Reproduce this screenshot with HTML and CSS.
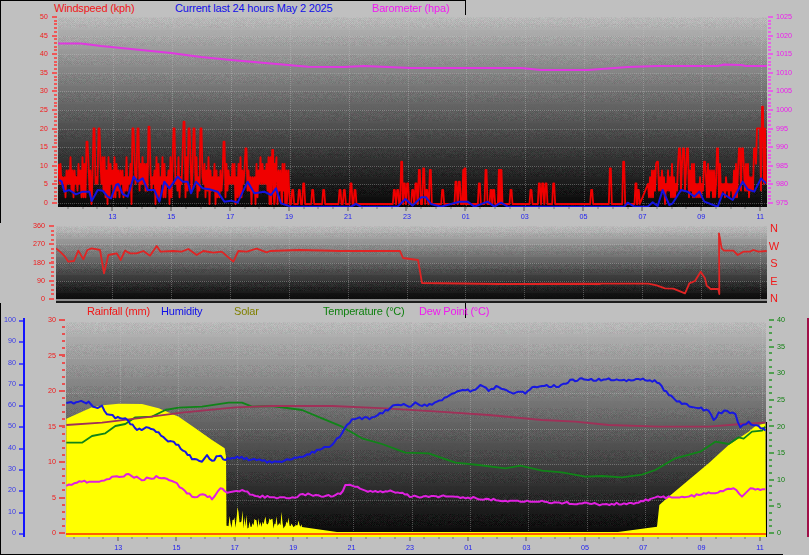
FILE: index.html
```html
<!DOCTYPE html>
<html lang="en">
<head>
    <meta charset="UTF-8">
    <title>Current last 24 hours</title>
    <link rel="stylesheet" href="styles.css">
</head>
<body>
    <section class="panel panel-wind">
        <div class="titles titles-wind">
            <span class="red">Windspeed (kph)</span>
            <span class="blue">Current last 24 hours May 2 2025</span>
            <span class="magenta">Barometer (hpa)</span>
        </div>
        <div class="chart-row">
            <div class="labels labels-wind red">
                <span>50</span><span>45</span><span>40</span><span>35</span><span>30</span><span>25</span>
                <span>20</span><span>15</span><span>10</span><span>5</span><span>0</span>
            </div>
            <div class="ticks ticks-wind"></div>
            <canvas id="windChart" width="709" height="190"></canvas>
            <div class="ticks ticks-baro"></div>
            <div class="labels labels-baro magenta">
                <span>1025</span><span>1020</span><span>1015</span><span>1010</span><span>1005</span><span>1000</span>
                <span>995</span><span>990</span><span>985</span><span>980</span><span>975</span>
            </div>
        </div>
        <div class="hour-ticks hour-ticks-wind"></div>
        <div class="hours hours-wind">
            <span>13</span><span>15</span><span>17</span><span>19</span><span>21</span><span>23</span>
            <span>01</span><span>03</span><span>05</span><span>07</span><span>09</span><span>11</span>
        </div>
    </section>

    <section class="panel panel-dir">
        <div class="chart-row">
            <div class="labels labels-dir red">
                <span>360</span><span>270</span><span>180</span><span>90</span><span>0</span>
            </div>
            <div class="ticks ticks-dir"></div>
            <canvas id="dirChart" width="711" height="77"></canvas>
            <div class="compass red">
                <span>N</span><span>W</span><span>S</span><span>E</span><span>N</span>
            </div>
        </div>
    </section>

    <section class="panel panel-temp">
        <div class="titles titles-temp">
            <span class="red">Rainfall (mm)</span>
            <span class="blue">Humidity</span>
            <span class="olive">Solar</span>
            <span class="green">Temperature (°C)</span>
            <span class="magenta">Dew Point (°C)</span>
        </div>
        <div class="chart-row">
            <div class="labels labels-hum blue-soft">
                <span>100</span><span>90</span><span>80</span><span>70</span><span>60</span><span>50</span>
                <span>40</span><span>30</span><span>20</span><span>10</span><span>0</span>
            </div>
            <div class="ticks ticks-hum"></div>
            <div class="labels labels-rain red">
                <span>30</span><span>25</span><span>20</span><span>15</span><span>10</span><span>5</span><span>0</span>
            </div>
            <div class="ticks ticks-rain"></div>
            <canvas id="tempChart" width="701" height="215"></canvas>
            <div class="ticks ticks-temp"></div>
            <div class="labels labels-temp green">
                <span>40</span><span>35</span><span>30</span><span>25</span><span>20</span>
                <span>15</span><span>10</span><span>5</span><span>0</span>
            </div>
            <div class="solar-bar"></div>
        </div>
        <div class="hour-ticks hour-ticks-temp"></div>
        <div class="hours hours-temp">
            <span>13</span><span>15</span><span>17</span><span>19</span><span>21</span><span>23</span>
            <span>01</span><span>03</span><span>05</span><span>07</span><span>09</span><span>11</span>
        </div>
        <div class="bottom-line"></div>
    </section>

    <script src="charts.js"></script>
</body>
</html>
```

FILE: styles.css
```css
html, body {
    margin: 0;
    padding: 0;
}
body {
    width: 809px;
    height: 555px;
    overflow: hidden;
    background-color: #c0c0c0;
    font-family: "Liberation Sans", Arial, sans-serif;
}
canvas {
    display: block;
}
.red { color: #f01818; }
.blue { color: #1010e8; }
.blue-soft { color: #3a3ae8; }
.magenta { color: #f018f0; }
.olive { color: #808000; }
.green { color: #108010; }

.panel {
    box-sizing: border-box;
    padding-left: 1px;
}
.panel-wind {
    height: 223px;
    padding-left: 0;
    border-left: 1px solid #000;
}
.panel-dir {
    height: 80px;
    padding-top: 3px;
}
.panel-temp {
    height: 252px;
    padding-left: 0;
    border-left: 1px solid #000;
}

/* legend rows */
.titles {
    display: grid;
    box-sizing: border-box;
    font-size: 11px;
    line-height: 14px;
    letter-spacing: -0.18px;
    white-space: nowrap;
}
.titles-wind {
    width: 465px;
    height: 17px;
    padding-left: 53px;
    grid-template-columns: 121px 197px 1fr;
    border-top: 1px solid #000;
    background: linear-gradient(#000, #000) right top / 1px 14px no-repeat;
}
.titles-temp {
    height: 17px;
    padding-left: 86px;
    padding-top: 1px;
    grid-template-columns: 74px 73px 89px 96px 1fr;
    background: linear-gradient(#000, #000) 464px 0 / 1px 15px no-repeat;
}

.chart-row {
    display: flex;
    align-items: flex-start;
}

/* value scales: zero-height spans sit centred on their tick */
.labels {
    display: flex;
    flex-direction: column;
    justify-content: space-between;
    font-size: 7.2px;
}
.labels span {
    height: 0;
    line-height: 0;
    text-align: right;
}
.labels-wind { width: 47px; height: 186px; margin-right: 4px; }
.labels-baro { height: 186px; margin-left: 3px; }
.labels-baro span { text-align: left; }
.labels-dir { width: 44px; height: 73px; margin-right: 4px; }
.labels-hum { width: 15px; height: 213px; margin-right: 3px; }
.labels-rain { width: 31px; height: 213px; margin-right: 3px; }
.labels-temp { height: 213px; margin-left: 3px; }
.labels-temp span { text-align: left; }

.ticks {
    flex: none;
    width: 5px;
    margin-top: -1px;
}
.ticks-wind {
    margin-right: 1px;
    height: 188px;
    background:
        repeating-linear-gradient(#ee5858 0 2px, transparent 2px 18.6px) left top / 5px 100% no-repeat,
        repeating-linear-gradient(#ee5858 0 2px, transparent 2px 3.72px) right top / 3px 100% no-repeat;
}
.ticks-baro {
    margin-left: 1px;
    height: 188px;
    background:
        repeating-linear-gradient(#e860e8 0 2px, transparent 2px 18.6px) left top / 5px 100% no-repeat,
        repeating-linear-gradient(#e860e8 0 2px, transparent 2px 3.72px) left top / 3px 100% no-repeat;
}
.ticks-dir {
    margin-right: 2px;
    height: 75px;
    background:
        repeating-linear-gradient(#ee5858 0 2px, transparent 2px 18.25px) left top / 5px 100% no-repeat,
        repeating-linear-gradient(#ee5858 0 2px, transparent 2px 4.56px) right top / 3px 100% no-repeat;
}
.ticks-hum {
    width: 6px;
    height: 219px;
    margin-top: -2px;
    background:
        linear-gradient(#1414ff, #1414ff) right top / 2px 100% no-repeat,
        repeating-linear-gradient(#5050f0 0 2px, transparent 2px 21.3px) left 2px / 5px 100% no-repeat;
}
.ticks-rain {
    width: 6px;
    margin-right: 1px;
    height: 215px;
    background:
        repeating-linear-gradient(#e85050 0 2px, transparent 2px 35.5px) left top / 6px 100% no-repeat,
        repeating-linear-gradient(#e85050 0 2px, transparent 2px 7.1px) right top / 3px 100% no-repeat;
}
.ticks-temp {
    margin-left: 2px;
    height: 215px;
    background:
        repeating-linear-gradient(#50a050 0 2px, transparent 2px 26.625px) left top / 5px 100% no-repeat,
        repeating-linear-gradient(#50a050 0 2px, transparent 2px 6.656px) left top / 3px 100% no-repeat;
}
#tempChart {
    margin-top: 2px;
}
.compass {
    display: flex;
    flex-direction: column;
    justify-content: space-between;
    width: 12px;
    height: 70px;
    margin: 2px 0 0 1px;
    font-size: 11px;
}
.compass span {
    height: 0;
    line-height: 0;
    text-align: center;
}
.solar-bar {
    width: 2px;
    height: 219px;
    margin-top: -2px;
    margin-left: auto;
    background-color: #a01048;
}

/* hour axis below the plots */
.hour-ticks {
    height: 4px;
}
.hour-ticks-wind {
    width: 709px;
    margin-left: 56px;
    background:
        repeating-linear-gradient(to right, #8c8c8c 0 2px, transparent 2px 58.9px) 54px 0 / 100% 4px no-repeat,
        repeating-linear-gradient(to right, #9c9c9c 0 2px, transparent 2px 14.725px) 10px 0 / 100% 2px no-repeat;
}
.hour-ticks-temp {
    width: 701px;
    margin-left: 63px;
    background:
        repeating-linear-gradient(to right, #8c8c8c 0 2px, transparent 2px 58.35px) 53px 0 / 100% 4px no-repeat,
        repeating-linear-gradient(to right, #9c9c9c 0 2px, transparent 2px 14.59px) 9px 0 / 100% 2px no-repeat;
}
.hours {
    display: grid;
    font-size: 7.2px;
    text-align: center;
    color: #2020f0;
}
.hours-wind {
    height: 12px;
    line-height: 12px;
    margin-left: 82px;
    grid-template-columns: repeat(12, 58.9px);
}
.hours-temp {
    height: 13px;
    line-height: 14px;
    margin-left: 88px;
    grid-template-columns: repeat(12, 58.35px);
}
.bottom-line {
    width: 782px;
    height: 1px;
    background-color: #000;
}
```

FILE: charts.js
```js
// Small seeded generator so the noisy parts are the same on every load
let seed = 48271;
function rnd() {
    seed = (seed * 16807) % 2147483647;
    return seed / 2147483647;
}

// Series were read off 3x crops: crop origin + zoomed coordinates
function fromCrop(ox, oy, pts) {
    return pts.map(p => [ox + p[0] / 3, oy + p[1] / 3]);
}

function drawBackground(ctx, w, h, bandHeight) {
    const img = ctx.createImageData(w, h);
    for (let y = 0; y < h; y++) {
        const t = y / h;
        const band = Math.floor(y / bandHeight);
        const pos = (y / bandHeight) - band;
        const stepT = (band + Math.floor(pos * 3) / 3) * bandHeight / h;
        const grey = 6 + 178 * Math.pow(1 - (t + stepT) / 2, 1.05);
        const amp = pos < 0.55 ? 14 : 2;
        for (let x = 0; x < w; x++) {
            const n = ((x + y) % 2 ? 1 : -1) * amp * 0.3 + (rnd() - 0.5) * amp;
            const i = (y * w + x) * 4;
            const tint = pos < 0.55 ? (rnd() - 0.5) * 8 : 0;
            img.data[i] = grey + n + tint;
            img.data[i + 1] = grey + n - tint;
            img.data[i + 2] = grey + n;
            img.data[i + 3] = 255;
        }
    }
    ctx.putImageData(img, 0, 0);
}

function drawGrid(ctx, w, h, rowStart, rowStep, colStart, colStep) {
    ctx.fillStyle = 'rgba(200,200,200,0.35)';
    for (let y = rowStart; y < h; y += rowStep) {
        for (let x = 0; x < w; x += 2) ctx.fillRect(x, Math.round(y), 1, 1);
    }
    for (let x = colStart; x < w; x += colStep) {
        for (let y = 0; y < h; y += 2) ctx.fillRect(Math.round(x), y, 1, 1);
    }
}

// pts are page coordinates, ox/oy the canvas origin on the page
function line(ctx, pts, ox, oy, color, width) {
    ctx.beginPath();
    pts.forEach((p, i) => {
        if (i === 0) ctx.moveTo(p[0] - ox, p[1] - oy);
        else ctx.lineTo(p[0] - ox, p[1] - oy);
    });
    ctx.strokeStyle = color;
    ctx.lineWidth = width;
    ctx.lineJoin = 'round';
    ctx.stroke();
}

// Adds jitter between the read-off points for the noisy sensor lines
function roughen(pts, amount) {
    const out = [];
    for (let i = 0; i < pts.length - 1; i++) {
        const [x0, y0] = pts[i];
        const [x1, y1] = pts[i + 1];
        const steps = Math.max(1, Math.round((x1 - x0) / 2.5));
        for (let s = 0; s < steps; s++) {
            const k = s / steps;
            out.push([x0 + (x1 - x0) * k, y0 + (y1 - y0) * k + Math.round((rnd() - 0.5) * amount)]);
        }
    }
    out.push(pts[pts.length - 1]);
    return out;
}

// Gusts swing between a low and a high reading on every sample
function busyGusts(fromX, toX, lowMax, highMin, highMax, peaks, zero, level) {
    const out = [];
    let up = true;
    for (let x = fromX; x < toX; x += 1) {
        let n;
        if (up) n = highMin + Math.floor(rnd() * (highMax - highMin + 1));
        else n = rnd() < 0.08 ? 0 : 1 + Math.floor(rnd() * lowMax);
        let y = zero - n * level;
        peaks.forEach(p => {
            if (Math.abs(p[0] - x) < 1) y = p[1];
        });
        out.push([x, y]);
        up = !up;
    }
    return out;
}

// Windspeed + barometer
function drawWind() {
    const ctx = document.getElementById('windChart').getContext('2d');
    const ox = 57, oy = 17;
    drawBackground(ctx, 709, 190, 18.6);
    drawGrid(ctx, 709, 190, 0, 18.6, 55, 58.9);

    const zero = 204;
    const level = 6.7;

    // busy stretch up to 18:30
    const leftPeaks = fromCrop(0, 0, [[258, 425], [280, 385], [295, 385], [395, 385], [410, 385], [445, 380],
        [520, 385], [548, 365], [565, 385], [580, 385], [600, 385], [668, 425], [735, 445]]);
    let gust = busyGusts(57.5, 288, 3, 4, 7, leftPeaks, zero, level);

    // calm night, mostly isolated gusts
    const spikes = fromCrop(270, 0, [[5, 450], [15, 510], [38, 555], [52, 550], [65, 570], [85, 570], [98, 550], [125, 570],
        [158, 570], [207, 570], [220, 570], [240, 550], [252, 570], [370, 570], [380, 570], [392, 485], [400, 550],
        [410, 550], [425, 570], [435, 550], [445, 510], [458, 505], [467, 570], [478, 510], [515, 570], [555, 545],
        [565, 545], [578, 510], [582, 505], [625, 550], [645, 510], [660, 570], [668, 570], [685, 510], [690, 510],
        [720, 570], [780, 570], [805, 550]])
        .concat(fromCrop(540, 0, [[5, 550], [15, 550], [38, 550], [152, 570], [208, 505], [248, 485], [285, 550], [292, 570]]));
    spikes.forEach(s => {
        gust.push([s[0] - 1.5, zero], [s[0] - 0.5, s[1]], [s[0] + 0.5, s[1]], [s[0] + 1.5, zero]);
    });

    // morning picks up again
    const rightPeaks = fromCrop(540, 0, [[350, 485], [415, 445], [428, 445], [440, 445], [490, 485], [530, 445], [595, 445],
        [605, 445], [640, 445], [650, 385], [655, 385], [665, 320], [672, 385]]);
    gust = gust.concat(busyGusts(647, 766, 2, 3, 6, rightPeaks, zero, level));
    gust.sort((a, b) => a[0] - b[0]);
    line(ctx, gust, ox, oy, '#f00000', 1.8);

    const avg = fromCrop(0, 0, [[175, 540], [182, 545], [190, 575], [205, 570], [225, 583], [245, 575], [265, 575], [272, 603],
        [290, 570], [305, 572], [320, 590], [330, 595], [345, 555], [352, 552], [365, 582], [380, 590], [398, 530],
        [410, 545], [425, 535], [440, 570], [460, 570], [475, 605], [490, 545], [505, 565], [530, 530], [545, 545],
        [560, 545], [570, 580], [585, 545], [605, 565], [625, 568], [650, 575], [670, 605], [690, 602], [710, 608],
        [740, 545], [760, 580], [790, 575]])
        .concat(fromCrop(270, 0, [[0, 585], [15, 565], [30, 610], [60, 620], [240, 620], [255, 612], [270, 620], [380, 620],
            [403, 597], [425, 617], [450, 592], [465, 592], [480, 612], [510, 620], [565, 605], [590, 605], [610, 620],
            [650, 605], [670, 620], [690, 608], [710, 620]]))
        .concat(fromCrop(540, 0, [[0, 620], [250, 620], [260, 608], [280, 620], [320, 620], [335, 607], [350, 618], [365, 570],
            [385, 615], [395, 610], [420, 570], [440, 575], [460, 590], [475, 575], [490, 605], [530, 620], [545, 580],
            [575, 600], [605, 545], [620, 568], [640, 575], [660, 535], [675, 550]]));
    line(ctx, avg, ox, oy, '#1414e0', 2);

    const baro = [[57, 43.5], [80, 43.5], [100, 46], [130, 49], [170, 53], [200, 57], [230, 60], [270, 63.5], [307, 66.7],
        [343, 67], [363, 66], [410, 68], [520, 68], [540, 70], [587, 70], [627, 67], [657, 66], [717, 66], [723, 64.5],
        [740, 65], [745, 66], [766, 66]];
    line(ctx, baro, ox, oy, '#e038e0', 2);
}

// Wind direction
function drawDirection() {
    const ctx = document.getElementById('dirChart').getContext('2d');
    const ox = 56, oy = 226;
    drawBackground(ctx, 711, 73, 18.25);
    drawGrid(ctx, 711, 73, 0, 18.25, 56, 58.9);
    ctx.fillStyle = '#8c8c8c';
    ctx.fillRect(0, 73, 711, 2);
    ctx.fillStyle = '#1c1c1c';
    ctx.fillRect(0, 75, 711, 2);

    const dir = fromCrop(0, 215, [[168, 100], [180, 110], [195, 125], [205, 140], [222, 138], [235, 107], [250, 133], [262, 105],
        [275, 100], [300, 105], [312, 175], [325, 120], [350, 115], [362, 135], [375, 107], [390, 115], [410, 115],
        [430, 108], [450, 122], [470, 93], [482, 110], [520, 108], [545, 110], [565, 102], [590, 120], [610, 108],
        [640, 113], [665, 110], [700, 140], [715, 108], [740, 110], [770, 101], [800, 112]])
        .concat([[270, 251], [300, 250], [340, 251], [400, 251], [403, 258], [418, 260], [422, 283], [500, 284], [600, 284]])
        .concat(fromCrop(540, 215, [[0, 206], [325, 206], [350, 211], [375, 220], [400, 221], [435, 235], [448, 205], [465, 198],
            [482, 170], [495, 190], [500, 212], [512, 222], [535, 222], [538, 237], [537, 55], [545, 100], [552, 107],
            [580, 107], [593, 120], [610, 110], [630, 110], [640, 105], [655, 110], [680, 108]]));
    line(ctx, dir, ox, oy, '#e02424', 1.8);
}

// Rain, humidity, solar, temperature, dew point
function drawTemperature() {
    const ctx = document.getElementById('tempChart').getContext('2d');
    const ox = 64, oy = 322;
    drawBackground(ctx, 700, 215, 21.3);
    drawGrid(ctx, 700, 215, 0, 35.5, 54, 58.35);

    // solar area
    const top = fromCrop(0, 300, [[193, 356], [270, 322], [310, 315], [350, 311], [420, 312], [470, 325], [530, 350], [580, 385],
        [630, 420], [668, 445], [672, 470]]);
    for (let x = 224.5; x < 300; x += 1) {
        const peak = 34 * (1 - (x - 224) / 100);
        top.push([x, 529 - rnd() * rnd() * peak - rnd() * 4]);
    }
    top.push([300, 527], [335, 532]);
    top.push(...fromCrop(540, 300, [[200, 700], [345, 680], [352, 615], [380, 590], [500, 490], [560, 435], [620, 395], [640, 378],
        [670, 370]]));
    ctx.beginPath();
    ctx.moveTo(0, 215);
    top.forEach(p => ctx.lineTo(p[0] - ox, p[1] - oy));
    ctx.lineTo(700, 215);
    ctx.closePath();
    ctx.fillStyle = '#ffff00';
    ctx.fill();
    ctx.fillRect(0, 210, 700, 5);

    // rainfall sits on zero
    ctx.fillStyle = '#ff6000';
    ctx.fillRect(0, 211, 700, 2);

    const temp = fromCrop(0, 300, [[193, 428], [240, 428], [270, 408], [310, 400], [340, 378], [370, 372], [400, 352], [450, 350],
        [490, 330], [530, 323], [600, 320], [680, 308], [720, 308], [750, 320]])
        .concat(fromCrop(270, 300, [[0, 318], [90, 330], [150, 355], [210, 380], [270, 415], [330, 432], [400, 458], [470, 460],
            [550, 488], [620, 495], [700, 505], [745, 497]]))
        .concat(fromCrop(540, 300, [[0, 512], [60, 517], [130, 530], [180, 528], [240, 532], [300, 524], [340, 510], [400, 475],
            [475, 455], [520, 425], [560, 432], [590, 412], [605, 416], [630, 395], [660, 392], [670, 380]]));
    line(ctx, temp, ox, oy, '#108418', 1.8);

    const pressure = fromCrop(0, 300, [[193, 375], [300, 368], [430, 352], [540, 338], [700, 322]])
        .concat(fromCrop(270, 300, [[0, 318], [180, 318], [340, 325], [500, 335], [650, 345]]))
        .concat(fromCrop(540, 300, [[0, 360], [100, 365], [200, 375], [350, 380], [500, 380], [600, 372], [670, 368]]));
    line(ctx, pressure, ox, oy, '#a03058', 1.8);

    const humidity = fromCrop(0, 300, [[193, 312], [230, 305], [260, 308], [280, 322], [300, 320], [315, 340], [340, 352], [370, 358],
        [385, 370], [405, 390], [440, 383], [470, 400], [490, 420], [515, 425], [550, 455], [570, 475], [600, 482],
        [615, 468], [630, 485], [650, 465], [670, 480], [705, 470], [740, 478], [780, 482]])
        .concat(fromCrop(270, 300, [[0, 488], [60, 478], [120, 458], [180, 435], [210, 400], [240, 355], [300, 355], [340, 333],
            [370, 315], [395, 312], [410, 320], [430, 310], [465, 318], [510, 298], [540, 278], [580, 268], [595, 275],
            [625, 258], [650, 270], [680, 258], [710, 278], [760, 278], [780, 265]]))
        .concat(fromCrop(540, 300, [[0, 258], [50, 258], [85, 242], [120, 238], [140, 240], [200, 238], [240, 238], [260, 242],
            [310, 238], [345, 245], [380, 285], [420, 312], [470, 322], [500, 335], [515, 360], [530, 340], [555, 332],
            [580, 345], [595, 382], [620, 368], [650, 378], [670, 392]]));
    line(ctx, roughen(humidity, 2.5), ox, oy, '#1818e0', 2);

    const dew = fromCrop(0, 300, [[193, 555], [240, 545], [300, 545], [330, 530], [380, 525], [420, 538], [470, 530], [510, 540],
        [540, 565], [570, 590], [610, 585], [630, 595], [655, 565], [675, 578], [720, 570], [760, 588]])
        .concat(fromCrop(270, 300, [[0, 592], [60, 592], [100, 583], [170, 588], [205, 582], [220, 558], [240, 557], [280, 572],
            [370, 575], [420, 590], [470, 588], [550, 590], [650, 597], [700, 605]]))
        .concat(fromCrop(540, 300, [[0, 605], [60, 608], [180, 613], [290, 608], [340, 592], [380, 592], [420, 593], [500, 580],
            [520, 580], [575, 565], [600, 590], [625, 565], [670, 568]]));
    line(ctx, roughen(dew, 2), ox, oy, '#e020e0', 2);

    ctx.fillStyle = '#000';
    ctx.fillRect(700, 100, 1, 115);
}

drawWind();
drawDirection();
drawTemperature();
```
